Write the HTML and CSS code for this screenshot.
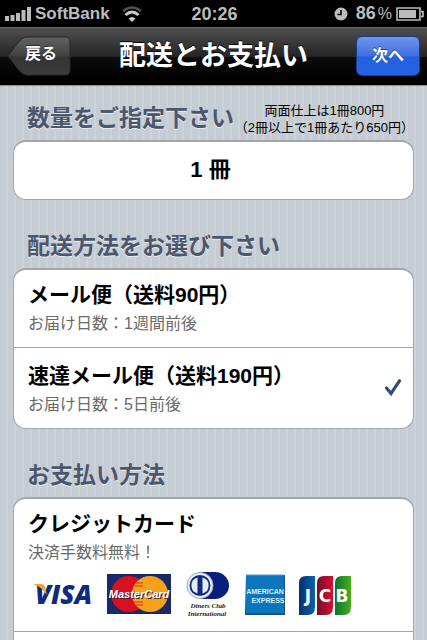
FILE: index.html
```html
<!DOCTYPE html>
<html lang="ja">
<head>
<meta charset="utf-8">
<meta name="viewport" content="width=device-width, initial-scale=1">
<title>配送とお支払い</title>
<link rel="stylesheet" href="styles.css">
</head>
<body>
<div class="status">
  <div class="carrier">
    <svg width="26" height="14" viewBox="0 0 26 14" fill="#bcbcbc" aria-hidden="true"><path d="M0 9h4v5H0zM5.500 8h4v6h-4zM11 6h4v8h-4zM16.500 3h4v11h-4zM22 0h4v14h-4z"/></svg>
    <span>SoftBank</span>
    <svg class="wifi" width="20" height="16" viewBox="0 0 20 16" fill="none" aria-hidden="true"><path d="M1 5q9-7 18 0" stroke="#505050" stroke-width="2.500"/><path d="M3.500 9q6.500-6 13 0" stroke="#c8c8c8" stroke-width="3"/><path d="M6.500 12.500q3.500-3 7 0L10 16z" fill="#c8c8c8"/></svg>
  </div>
  <time class="clock">20:26</time>
  <div class="power">
    <svg class="alarm" width="14" height="14" viewBox="0 0 14 14" aria-hidden="true"><circle cx="7" cy="7" r="6.500" fill="#bcbcbc"/><path d="M7 3v4.500H3.500" fill="none" stroke="#000" stroke-width="1.600"/></svg>
    <span>86<span class="percent">%</span></span>
    <svg width="28" height="14" viewBox="0 0 28 14" aria-hidden="true"><path d="M1 1h23v12H1zM25 4.500h2v5h-2" fill="none" stroke="#bcbcbc" stroke-width="1.600"/><path d="M3 3h17v8H3z" fill="#bcbcbc"/></svg>
  </div>
</div>
<header class="navbar">
  <button class="nav-button back" type="button">
    <svg class="back-shape" viewBox="0 0 64 40" preserveAspectRatio="none" aria-hidden="true">
      <defs><linearGradient id="back-fill" x1="0" y1="0" x2="0" y2="1"><stop offset="0" stop-color="#626262"/><stop offset=".5" stop-color="#414141"/><stop offset=".52" stop-color="#343434"/><stop offset="1" stop-color="#3b3b3b"/></linearGradient></defs>
      <path d="M1 20Q5 15 10 8Q15 1 20 1H58Q63 1 63 6V34Q63 39 58 39H20Q15 39 10 32Q5 25 1 20Z" fill="url(#back-fill)" stroke="#292929"/>
    </svg>
    <span class="back-label">戻る</span>
  </button>
  <h1>配送とお支払い</h1>
  <button class="nav-button next" type="button">次へ</button>
</header>
<main>
  <section>
    <div class="heading">
      <h2>数量をご指定下さい</h2>
      <p class="note">両面仕上は1冊800円<br>（2冊以上で1冊あたり650円）</p>
    </div>
    <div class="group"><button class="quantity" type="button">1 冊</button></div>
  </section>
  <section>
    <div class="heading"><h2>配送方法をお選び下さい</h2></div>
    <div class="group">
      <label class="row">
        <input type="radio" name="delivery">
        <span class="text"><strong>メール便（送料90円）</strong><span class="detail">お届け日数：1週間前後</span></span>
      </label>
      <label class="row">
        <input type="radio" name="delivery" checked>
        <span class="text"><strong>速達メール便（送料190円）</strong><span class="detail">お届け日数：5日前後</span></span>
        <svg class="check" width="18" height="20" viewBox="0 0 18 20" fill="none" aria-hidden="true"><path d="M2.500 9L7 14.500L15.500 1.800" stroke="#344b80" stroke-width="3.200" stroke-linecap="round"/></svg>
      </label>
    </div>
  </section>
  <section class="payment">
    <div class="heading"><h2>お支払い方法</h2></div>
    <div class="group open">
      <label class="row">
        <input type="radio" name="payment">
        <span class="text">
          <strong>クレジットカード</strong><span class="detail">決済手数料無料！</span>
          <span class="brands">
            <svg width="60" height="46" viewBox="0 0 60 46" role="img" aria-label="VISA">
              <text x="2" y="32" class="visa">VISA</text>
              <path d="M0 12H8Q11 12 12 15L14 23Q9 15 0 12Z" fill="#f0a526"/>
            </svg>
            <svg width="64" height="46" viewBox="0 0 64 46" role="img" aria-label="MasterCard">
              <path d="M0 2h64v40H0z" fill="#152a66"/>
              <circle cx="22" cy="22" r="18" fill="#d9101f"/><circle cx="43" cy="22" r="18" fill="#f5a21b"/>
              <path d="M29 11h7M28 14h8M27 30h9M29 33h7" stroke="#e4571d" stroke-width="1.500"/>
              <text x="32" y="26" class="master">MasterCard</text>
            </svg>
            <svg width="46" height="46" viewBox="0 0 46 46" role="img" aria-label="Diners Club International">
              <path d="M14 0H30a14 13.500 0 0 1 0 27H14z" fill="#06207c"/>
              <circle cx="15" cy="13.500" r="13" fill="#e9edf5" stroke="#9ba7bd"/>
              <circle cx="15" cy="13.500" r="10.500" fill="#0c2b84"/>
              <path d="M12.500 5.500v16a8.300 8.300 0 0 1 0-16zM17.500 5.500v16a8.300 8.300 0 0 0 0-16z" fill="#e9edf5"/>
              <text x="23" y="36" class="diners">Diners Club</text>
              <text x="22" y="44" class="diners">International</text>
            </svg>
            <svg width="40" height="46" viewBox="0 0 40 46" role="img" aria-label="American Express">
              <path d="M1 3h39v40H0v-2z" fill="#174f87"/><path d="M1 3h38v38H1z" fill="#0b76bd"/>
              <path d="M1 3h38" stroke="#4d9fd2"/>
              <text x="20" y="22" class="amex">AMERICAN</text>
              <text x="23" y="31" class="amex">EXPRESS</text>
            </svg>
            <svg width="52" height="46" viewBox="0 0 52 46" role="img" aria-label="JCB">
              <defs>
                <linearGradient id="jcb-blue"><stop offset="0" stop-color="#063071"/><stop offset="1" stop-color="#0862ad"/></linearGradient>
                <linearGradient id="jcb-red"><stop offset="0" stop-color="#750c29"/><stop offset="1" stop-color="#d90f35"/></linearGradient>
                <linearGradient id="jcb-green"><stop offset="0" stop-color="#08752f"/><stop offset="1" stop-color="#48ae20"/></linearGradient>
              </defs>
              <path d="M7 4h9v31q0 8-7 8H0V11q0-7 7-7z" fill="url(#jcb-blue)"/>
              <path d="M25 4h9v31q0 8-7 8h-9V11q0-7 7-7z" fill="url(#jcb-red)"/>
              <path d="M43 4h9v31q0 8-7 8h-9V11q0-7 7-7z" fill="url(#jcb-green)"/>
              <text x="9" y="30" class="jcb">J</text>
              <text x="26" y="30" class="jcb">C</text>
              <text x="43" y="30" class="jcb">B</text>
            </svg>
          </span>
        </span>
      </label>
    </div>
  </section>
</main>
</body>
</html>
```
FILE: styles.css
```css
* { box-sizing: border-box; }

body {
  margin: 0;
  min-height: 100vh;
  display: flex;
  flex-direction: column;
  color: #000;
  font-family: "Liberation Sans", "Noto Sans CJK JP", sans-serif;
  background: #c5ccd4;
}

svg { display: block; flex: none; }
h1, h2, p { margin: 0; }
button { font-family: inherit; cursor: pointer; }

/* Status bar */
.status {
  display: grid;
  grid-template-columns: 1fr auto 1fr;
  align-items: center;
  height: 27px;
  padding: 0 3px 0 5px;
  background: #000;
  color: #bcbcbc;
  font-size: 18px;
  font-weight: bold;
  line-height: 26px;
}
.carrier, .power { display: flex; align-items: center; gap: 4px; }
.carrier { font-size: 17px; }
.wifi { margin-left: 8px; }
.power { justify-content: flex-end; }
.alarm { margin-right: 4px; }
.percent { margin-left: 2px; font-size: 16px; font-weight: normal; }

/* Navigation bar */
.navbar {
  display: grid;
  grid-template-columns: 1fr auto 1fr;
  align-items: center;
  height: 58px;
  padding: 0 7px 1px;
  border-top: 1px solid #6b6b6b;
  background: linear-gradient(#505050, #242424 50%, #0b0b0b 52%, #000);
  color: #fff;
}
h1 {
  font-size: 27px;
  font-weight: bold;
  line-height: 40px;
  text-shadow: 0 -1px 0 #000;
}
.nav-button {
  height: 40px;
  width: 64px;
  padding: 0;
  color: #fff;
  font-size: 16px;
  font-weight: bold;
  line-height: 36px;
  text-shadow: 0 -1px 0 rgba(0, 0, 0, .5);
}
.back { display: grid; border: 0; background: none; }
.back-shape, .back-label { grid-area: 1 / 1; }
.back-shape { width: 100%; height: 40px; }
.back-label { position: relative; padding-left: 4px; }
.next {
  justify-self: end;
  border: 1px solid #1c3c86;
  border-radius: 6px;
  background: linear-gradient(#6f94ea, #3f70e2 50%, #2360dd 52%, #2464e4);
}

/* Content on a pinstriped ground */
main {
  flex: 1;
  display: flex;
  flex-direction: column;
  padding: 0 13px;
  border-top: 1px solid #8d9097;
  background: repeating-linear-gradient(90deg, #c5ccd4 0 6px, #cbd2d8 6px 8px);
}
section { padding-top: 32px; }
section:first-child { padding-top: 18px; }
.heading {
  display: flex;
  justify-content: space-between;
  height: 36px;
  padding-left: 14px;
}
h2 {
  color: #4c566c;
  font-size: 23px;
  font-weight: bold;
  line-height: 28px;
  white-space: nowrap;
  text-shadow: 0 1px 0 #e8ecf0;
}
.note {
  margin-top: -2px;
  font-size: 13px;
  line-height: 17px;
  text-align: center;
  white-space: nowrap;
}
.group {
  border: 1px solid #a3a6aa;
  border-top: 2px solid #a3a6aa;
  border-radius: 13px;
  background: #fff;
  overflow: hidden;
}
.quantity {
  display: block;
  width: 100%;
  height: 57px;
  padding: 0 6px 8px 0;
  border: 0;
  background: none;
  color: #000;
  font-size: 22px;
  font-weight: bold;
}
.row {
  position: relative;
  display: flex;
  align-items: center;
  padding: 11px 11px 13px 14px;
  border-bottom: 1px solid #a3a6aa;
}
.row + .row { padding-top: 14px; border-bottom: 0; }
.row input { position: absolute; opacity: 0; }
.text { flex: 1; }
strong {
  display: block;
  font-size: 21px;
  line-height: 28px;
}
.detail {
  display: block;
  margin-top: 5px;
  color: #6a6a6a;
  font-size: 16px;
  line-height: 20px;
}

/* The payment list runs on past the bottom of the window */
.payment { flex: 1; display: flex; flex-direction: column; }
.open {
  flex: 1;
  min-height: 144px;
  border-bottom: 0;
  border-radius: 13px 13px 0 0;
}
.brands {
  display: flex;
  gap: 14px;
  margin-top: 9px;
  padding-left: 5px;
}
.visa { fill: #0b2a80; font: italic 800 26px "Open Sans", sans-serif; }
.master {
  fill: #fff;
  font: italic bold 11px "Liberation Sans", sans-serif;
  text-anchor: middle;
  text-shadow: 1px 1px 0 #38204a;
}
.diners { fill: #222; font: italic bold 7px "Liberation Serif", serif; text-anchor: middle; }
.amex { fill: #d9f0ff; font: bold 7px "Liberation Sans", sans-serif; text-anchor: middle; }
.jcb { fill: #fff; font: bold 17px "DejaVu Sans", sans-serif; text-anchor: middle; }
```
